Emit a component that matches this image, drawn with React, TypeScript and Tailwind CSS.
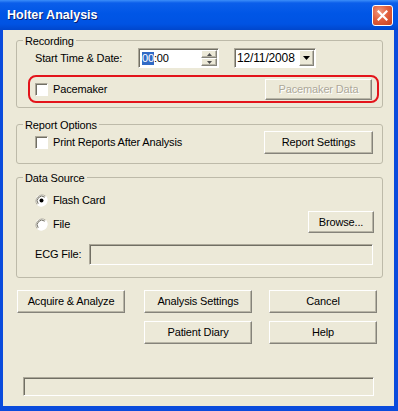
import React from "react";

const raised =
  "border border-t-white border-l-white border-r-[#85837A] border-b-[#85837A] shadow-[inset_-1px_-1px_0_#B8B5A6] bg-[#ECE9D8]";
const sunken =
  "border border-t-[#ACA899] border-l-[#ACA899] border-r-white border-b-white shadow-[inset_1px_1px_0_#716F64]";

function Button({ label, w = "w-[108px]", h = "h-[23px]", disabled = false, className = "" }: { label: string; w?: string; h?: string; disabled?: boolean; className?: string }) {
    return (
        <div className={`${raised} ${w} ${h} flex items-center justify-center shrink-0 ${disabled ? "text-[#ACA899] [text-shadow:1px_1px_0_#fff]" : "text-black"} ${className}`}>
            {label}
        </div>
    );
}

function CheckBox() {
    return <span className={`${sunken} block w-[13px] h-[13px] bg-white shrink-0`} />;
}

function Radio({ checked = false }: { checked?: boolean }) {
    return (
        <svg width="13" height="13" viewBox="0 0 13 13" className="shrink-0">
            <circle cx="6.5" cy="6.5" r="6" fill="#fff" />
            <path d="M10.7 2.3 A6 6 0 0 0 2.3 10.7" stroke="#ACA899" fill="none" />
            <path d="M9.8 3.2 A4.7 4.7 0 0 0 3.2 9.8" stroke="#716F64" fill="none" />
            <path d="M2.3 10.7 A6 6 0 0 0 10.7 2.3" stroke="#fff" fill="none" />
            {checked && <circle cx="6.5" cy="6.5" r="2" fill="#000" />}
        </svg>
    );
}

function GroupBox({ label, className, children }: { label: string; className: string; children: React.ReactNode }) {
    return (
        <div className={`relative ml-[13px] w-[367px] rounded-[3px] border border-[#BDBAA9] ${className}`}>
            <span className="absolute -top-[7px] left-[6px] bg-[#ECE9D8] px-[2px] leading-[14px]">{label}</span>
            {children}
        </div>
    );
}

function App() {
    return (
        <div className="w-[398px] h-[411px] flex flex-col bg-[#0A4BDC] font-['Liberation_Sans',Arial,sans-serif] text-[11px] tracking-[-0.15px] text-black overflow-hidden">
            {/* title bar */}
            <div className="h-[30px] shrink-0 flex items-center justify-between pl-[7px] pr-[5px] bg-[linear-gradient(180deg,#3C8EF9_0%,#0B5EEA_10%,#0056E6_45%,#0053E3_80%,#0046CC_100%)]">
                <span className="text-white font-bold text-[12.5px] tracking-normal [text-shadow:1px_1px_0_#0A1E6E]">Holter Analysis</span>
                <div className="w-[21px] h-[21px] rounded-[3px] border border-white bg-[radial-gradient(circle_at_35%_30%,#F09A80_0%,#E2603E_45%,#C8401E_100%)] flex items-center justify-center">
                    <svg width="11" height="11" viewBox="0 0 11 11">
                        <path d="M1.5 1.5 L9.5 9.5 M9.5 1.5 L1.5 9.5" stroke="#fff" strokeWidth="2.2" strokeLinecap="square" />
                    </svg>
                </div>
            </div>

            {/* body */}
            <div className="flex-1 ml-[3px] mr-[4px] mb-[5px] bg-[#ECE9D8] flex flex-col">
                <GroupBox label="Recording" className="mt-[10px] h-[68px]">
                    <div className="flex items-center h-[20px] mt-[7px] pl-[18px]">
                        <span className="w-[103px]">Start Time &amp; Date:</span>
                        <div className={`${sunken} w-[81px] h-[20px] bg-white flex items-center`}>
                            <span className="ml-[3px] bg-[#316AC5] text-white leading-[13px]">00</span>
                            <span className="leading-[13px]">:00</span>
                            <div className="ml-auto mr-[1px] w-[16px] h-[16px] flex flex-col">
                                <div className={`${raised} flex-1 flex items-center justify-center`}>
                                    <svg width="5" height="3" viewBox="0 0 5 3"><path d="M0 3 L2.5 0 L5 3 Z" fill="#4D4D4D" /></svg>
                                </div>
                                <div className={`${raised} flex-1 flex items-center justify-center`}>
                                    <svg width="5" height="3" viewBox="0 0 5 3"><path d="M0 0 L2.5 3 L5 0 Z" fill="#4D4D4D" /></svg>
                                </div>
                            </div>
                        </div>
                        <div className={`${sunken} ml-[15px] w-[82px] h-[20px] bg-white flex items-center`}>
                            <span className="ml-[2px] text-[12px]">12/11/2008</span>
                            <div className={`${raised} ml-auto mr-[1px] w-[15px] h-[16px] flex items-center justify-center`}>
                                <svg width="7" height="4" viewBox="0 0 7 4"><path d="M0 0 L3.5 4 L7 0 Z" fill="#000" /></svg>
                            </div>
                        </div>
                    </div>
                    <div className="mt-[7px] ml-[11px] w-[351px] h-[28px] rounded-[8px] border-2 border-[#E3141B] flex items-center justify-between pl-[5px] pr-[5px]">
                        <div className="flex items-center gap-[5px]">
                            <CheckBox />
                            <span>Pacemaker</span>
                        </div>
                        <Button label="Pacemaker Data" w="w-[107px]" h="h-[21px]" disabled />
                    </div>
                </GroupBox>

                <GroupBox label="Report Options" className="mt-[16px] h-[40px]">
                    <div className="flex items-center justify-between h-[23px] mt-[6px] pl-[18px] pr-[9px]">
                        <div className="flex items-center gap-[5px]">
                            <CheckBox />
                            <span>Print Reports After Analysis</span>
                        </div>
                        <Button label="Report Settings" w="w-[109px]" />
                    </div>
                </GroupBox>

                <GroupBox label="Data Source" className="mt-[13px] h-[101px]">
                    <div className="flex items-center gap-[5px] h-[14px] mt-[15px] pl-[18px]">
                        <Radio checked />
                        <span>Flash Card</span>
                    </div>
                    <div className="flex items-start justify-between h-[22px] mt-[4px] pl-[18px] pr-[8px]">
                        <div className="flex items-center gap-[5px] h-[14px] mt-[6px]">
                            <Radio />
                            <span>File</span>
                        </div>
                        <Button label="Browse..." w="w-[66px]" h="h-[22px]" />
                    </div>
                    <div className="flex items-center h-[21px] mt-[11px] pl-[18px] pr-[9px]">
                        <span className="w-[54px]">ECG File:</span>
                        <div className={`${sunken} flex-1 h-[21px] bg-[#ECE9D8]`} />
                    </div>
                </GroupBox>

                <div className="flex mt-[12px] ml-[14px]">
                    <Button label="Acquire &amp; Analyze" />
                    <Button label="Analysis Settings" className="ml-[19px]" />
                    <Button label="Cancel" className="ml-[17px]" />
                </div>
                <div className="flex mt-[8px] ml-[141px]">
                    <Button label="Patient Diary" />
                    <Button label="Help" className="ml-[17px]" />
                </div>

                <div className={`${sunken} mt-[33px] ml-[20px] w-[351px] h-[19px]`} />
            </div>
        </div>
    );
}

export default App;
